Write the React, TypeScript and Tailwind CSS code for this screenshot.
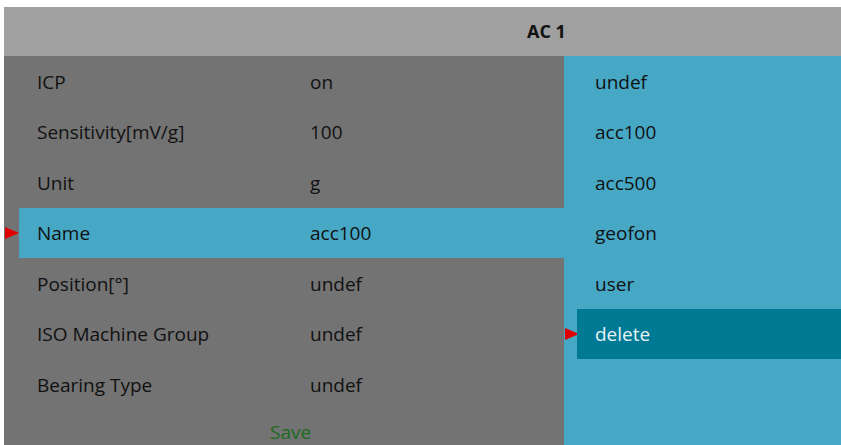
const rows = [
  { label: "ICP", value: "on" },
  { label: "Sensitivity[mV/g]", value: "100" },
  { label: "Unit", value: "g" },
  { label: "Name", value: "acc100", active: true },
  { label: "Position[°]", value: "undef" },
  { label: "ISO Machine Group", value: "undef" },
  { label: "Bearing Type", value: "undef" },
];

const options = ["undef", "acc100", "acc500", "geofon", "user", "delete"];

function Arrow() {
  return (
    <svg width="14" height="14" viewBox="0 0 14 14" className="shrink-0">
      <polygon points="0,1 14,7 0,13" fill="#e00000" />
    </svg>
  );
}

export default function App() {
  return (
    <div
      className="w-[841px] h-[445px] overflow-hidden bg-white pt-[7px] pl-[4px] flex flex-col text-[19px]"
      style={{ fontFamily: '"Open Sans", "Noto Sans", sans-serif' }}
    >
      <div className="h-[49px] shrink-0 bg-[#a0a0a0] flex items-center pl-[523px]">
        <span className="font-bold text-[18px] text-[#111]">AC 1</span>
      </div>
      <div className="flex flex-1 min-h-0">
        <div className="w-[560px] bg-[#737373] flex flex-col">
          {rows.map((r) => (
            <div key={r.label} className="h-[50.5px] shrink-0 flex items-center">
              <div className="w-[15px] flex justify-start pl-[1px]">
                {r.active && <Arrow />}
              </div>
              <div
                className={`flex-1 h-full flex items-center pt-[1px] ${
                  r.active ? "bg-[#46a8c5]" : ""
                }`}
              >
                <span className="w-[291px] pl-[18px] text-[#111]">{r.label}</span>
                <span className="text-[#111]">{r.value}</span>
              </div>
            </div>
          ))}
          <div className="h-[50px] shrink-0 flex pl-[266px] pt-[10px]">
            <span className="text-[#1d6b1d] leading-[24px]">Save</span>
          </div>
        </div>
        <div className="flex-1 bg-[#46a8c5] flex flex-col">
          {options.map((o) => {
            const active = o === "delete";
            return (
              <div key={o} className="h-[50.5px] shrink-0 flex items-center">
                <div className="w-[13px] flex pl-[1px]">{active && <Arrow />}</div>
                <div
                  className={`flex-1 h-full flex items-center pl-[18px] pt-[1px] ${
                    active ? "bg-[#007a94] text-[#e6f2f4]" : "text-[#111]"
                  }`}
                >
                  {o}
                </div>
              </div>
            );
          })}
        </div>
      </div>
    </div>
  );
}
